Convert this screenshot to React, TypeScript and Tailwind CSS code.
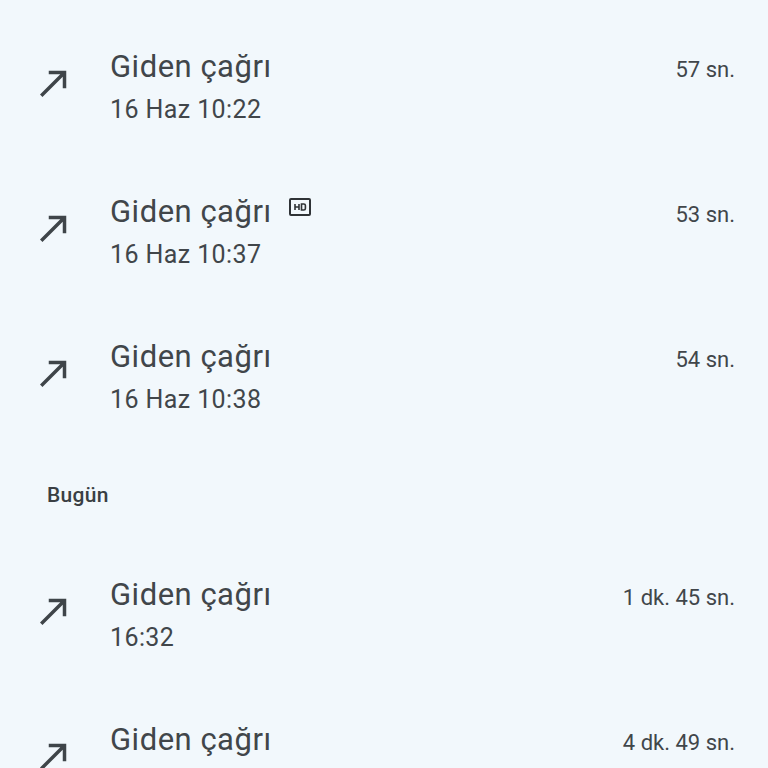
import React from 'react'

type Call = {
  time: string
  duration: string
  hd?: boolean
}

const earlier: Call[] = [
  { time: '16 Haz 10:22', duration: '57 sn.' },
  { time: '16 Haz 10:37', duration: '53 sn.', hd: true },
  { time: '16 Haz 10:38', duration: '54 sn.' },
]

const today: Call[] = [
  { time: '16:32', duration: '1 dk. 45 sn.' },
  { time: '16:58', duration: '4 dk. 49 sn.' },
]

function OutgoingIcon() {
  return (
    <svg viewBox="0 0 24 24" className="h-[42px] w-[42px] shrink-0" fill="#3f4549">
      <path d="M9 5v2h6.59L4 18.59 5.41 20 17 8.41V15h2V5z" />
    </svg>
  )
}

function HdIcon() {
  return (
    <svg viewBox="0 0 22 18" className="ml-[17px] mt-[6px] h-[18px] w-[22px] self-start" fill="none" stroke="#2f3336">
      <rect x="1" y="1" width="20" height="16" rx="1" strokeWidth="2" />
      <path d="M6 6v6M10 6v6M6 9h4" strokeWidth="1.6" />
      <path d="M12.5 6h2.3a1.6 1.6 0 0 1 1.6 1.6v2.8a1.6 1.6 0 0 1-1.6 1.6h-2.3z" strokeWidth="1.6" />
    </svg>
  )
}

function CallRow({ call }: { call: Call }) {
  return (
    <div className="flex h-[145px] items-center">
      <div className="flex w-[110px] shrink-0 pb-[7px] pl-[33px]">
        <OutgoingIcon />
      </div>
      <div className="flex min-w-0 flex-1 flex-col pr-[33px]">
        <div className="flex items-baseline justify-between">
          <div className="flex">
            <span className="text-[31px] leading-[40px] tracking-[0.5px] text-[#41464a]">Giden çağrı</span>
            {call.hd && <HdIcon />}
          </div>
          <span className="text-[22px] leading-[40px] text-[#41464a]">{call.duration}</span>
        </div>
        <div className="mt-[4px] text-[25px] leading-[32px] tracking-[0.4px] text-[#41464a]">{call.time}</div>
      </div>
    </div>
  )
}

export default function App() {
  return (
    <div
      className="h-[768px] w-[768px] overflow-hidden bg-[#f2f8fc] pt-[14px]"
      style={{ fontFamily: 'Roboto, "Open Sans", sans-serif' }}
    >
      {earlier.map((c, i) => (
        <CallRow key={i} call={c} />
      ))}
      <div className="flex h-[93px] items-center pl-[47px]">
        <span className="text-[21px] font-medium tracking-[0.3px] text-[#3a3f43]">Bugün</span>
      </div>
      {today.map((c, i) => (
        <CallRow key={i} call={c} />
      ))}
    </div>
  )
}
